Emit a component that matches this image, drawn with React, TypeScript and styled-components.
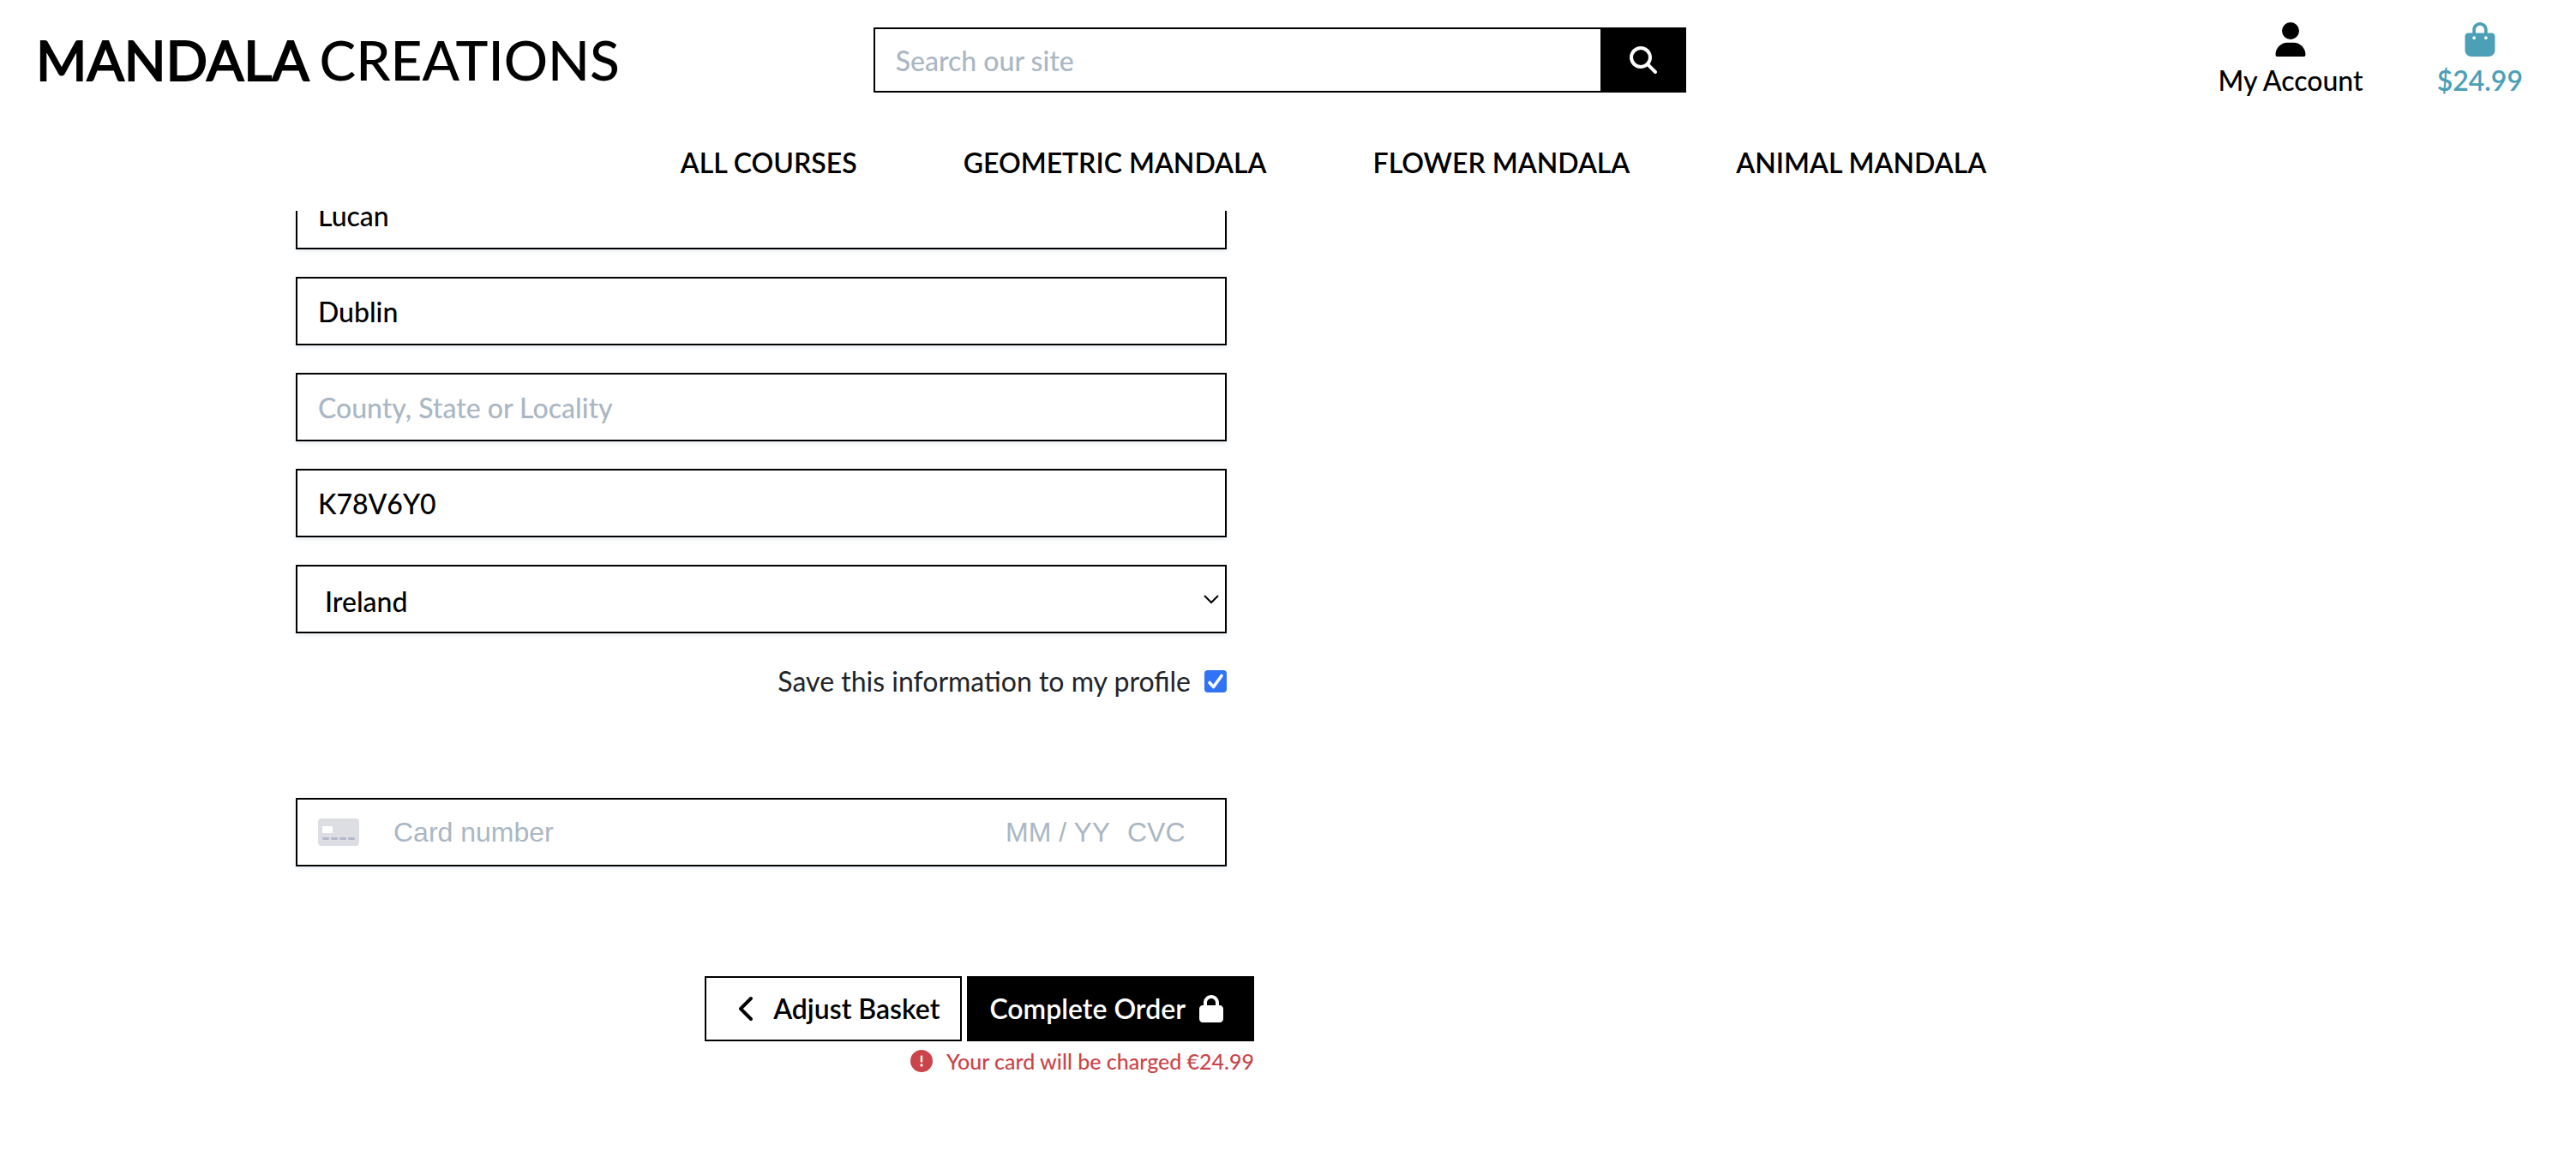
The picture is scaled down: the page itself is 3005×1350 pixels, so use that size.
import React from "react";
import styled, { createGlobalStyle, css } from "styled-components";
import {
  FaBagShopping,
  FaChevronLeft,
  FaCircleExclamation,
  FaLock,
  FaMagnifyingGlass,
  FaUser,
} from "react-icons/fa6";

const sans = `Lato, "Open Sans", sans-serif`;
const cardSans = `"Liberation Sans", Helvetica, Arial, sans-serif`;
const ink = "#000";
const placeholder = "#aab7c4";

const GlobalStyle = createGlobalStyle`
  *, *::before, *::after { box-sizing: border-box; }
  body {
    margin: 0;
    background: #fff;
    color: ${ink};
    font-family: ${sans};
    font-size: 32px;
    line-height: 48px;
  }
  input, select, button { font: inherit; color: inherit; border-radius: 0; margin: 0; }
  input::placeholder { color: ${placeholder}; opacity: 1; }
`;

const Header = styled.header`
  position: sticky;
  top: 0;
  z-index: 2;
  background: #fff;
`;

const TopBar = styled.div`
  display: grid;
  grid-template-columns: repeat(3, 1fr);
  align-items: center;
  height: 140px;
`;

const Logo = styled.a`
  display: flex;
  gap: 12px;
  padding-left: 42px;
  font-size: 64px;
  line-height: 80px;
  white-space: nowrap;
  color: ${ink};
  font-weight: 500;
  text-decoration: none;

  strong {
    font-weight: 400;
    -webkit-text-stroke: 2px currentColor;
  }
`;

const SearchForm = styled.form`
  display: flex;
  padding: 0 36px 0 17px;
`;

const SearchInput = styled.input`
  flex: 1;
  min-width: 0;
  height: 76px;
  padding: 0 24px;
  border: 2px solid ${ink};
  border-right: 0;
  background: #fff;
  outline: 0;
  font-weight: 500;
`;

const SearchButton = styled.button`
  display: flex;
  align-items: center;
  justify-content: center;
  width: 100px;
  height: 76px;
  padding: 0;
  border: 0;
  background: ${ink};
  color: #fff;
`;

const AccountLinks = styled.div`
  display: flex;
  justify-content: flex-end;
  gap: 86px;
  padding: 4px 62px 0 0;
`;

const AccountLink = styled.a<{ $tint?: string }>`
  display: flex;
  flex-direction: column;
  align-items: center;
  gap: 4px;
  color: ${(p) => p.$tint ?? ink};
  font-weight: ${(p) => (p.$tint ? 600 : 500)};
  text-decoration: none;
`;

const Nav = styled.nav`
  display: flex;
  justify-content: center;
  gap: 124px;
  padding: 26px 0 32px 106px;
`;

const NavLink = styled.a`
  color: ${ink};
  font-weight: 600;
  text-decoration: none;
  white-space: nowrap;
`;

const Main = styled.main`
  max-width: 2315px;
  margin: -35px auto 0;
`;

const OrderForm = styled.form`
  display: flex;
  flex-direction: column;
  width: 1086px;
  max-width: 100%;
`;

const Fields = styled.div`
  display: flex;
  flex-direction: column;
  gap: 32px;
`;

const fieldBox = css`
  width: 100%;
  height: 80px;
  border: 2px solid ${ink};
  background: #fff;
  box-shadow: 0 2px 6px 0 #e6ebf1;
`;

const TextField = styled.input`
  ${fieldBox}
  padding: 0 24px;
  outline: 0;
  font-weight: 500;
`;

const SelectWrap = styled.div`
  position: relative;
  display: flex;

  svg {
    position: absolute;
    right: 8px;
    top: 34px;
    pointer-events: none;
  }
`;

const Select = styled.select`
  ${fieldBox}
  font-weight: 500;
  appearance: none;
  padding: 6px 32px 0;
  outline: 0;
`;

const SaveRow = styled.div`
  display: flex;
  justify-content: flex-end;
  align-items: center;
  gap: 16px;
  margin-top: 32px;
  color: #212529;
`;

const Tick = styled.span`
  position: relative;
  display: flex;
  width: 26px;
  height: 26px;

  svg {
    position: absolute;
    inset: 0;
    pointer-events: none;
  }
`;

const Checkbox = styled.input`
  appearance: none;
  width: 26px;
  height: 26px;
  border-radius: 4px;
  background: #fff;
  border: 2px solid #767676;

  &:checked {
    background: #3074f5;
    border: 0;
  }
`;

const CardBox = styled.div`
  ${fieldBox}
  display: flex;
  align-items: center;
  margin-top: 112px;
  padding: 0 24px;
  font-family: ${cardSans};
`;

const CardInput = styled.input<{ $width?: number }>`
  ${(p) => (p.$width ? `width: ${p.$width}px;` : "flex: 1; margin-left: 40px;")}
  min-width: 0;
  height: 48px;
  padding: 0;
  border: 0;
  outline: 0;
  background: transparent;
`;

const Actions = styled.div`
  display: flex;
  justify-content: flex-end;
  gap: 6px;
  margin: 128px -32px 0 0;
`;

const actionBox = css`
  display: flex;
  align-items: center;
  gap: 14px;
  height: 76px;
  border: 2px solid ${ink};
  text-decoration: none;
  white-space: nowrap;
  font-weight: 600;
`;

const BackLink = styled.a`
  ${actionBox}
  padding: 0 24px 0 32px;
  background: #fff;
  color: ${ink};
`;

const SubmitButton = styled.button`
  ${actionBox}
  padding: 0 32px 0 24px;
  background: ${ink};
  color: #fff;
`;

const ChargeNote = styled.p`
  display: flex;
  justify-content: flex-end;
  align-items: center;
  gap: 16px;
  margin: 4px -32px 0 0;
  font-size: 25px;
  font-weight: 500;
  line-height: 38px;
  color: #cb444a;
`;

const links = ["ALL COURSES", "GEOMETRIC MANDALA", "FLOWER MANDALA", "ANIMAL MANDALA"];

const fields = [
  { label: "Street Address", value: "Lucan" },
  { label: "Town or City", value: "Dublin" },
  { label: "County, State or Locality", value: "" },
  { label: "Postal Code", value: "K78V6Y0" },
];

function CardIcon() {
  return (
    <svg width="48" height="32" viewBox="0 0 48 32" aria-hidden="true">
      <rect width="48" height="32" rx="4" fill="#dddee4" />
      <rect x="5" y="9" width="12" height="8" rx="1" fill="#fff" />
      {[5, 15, 25, 35].map((x) => (
        <rect key={x} x={x} y="22" width="8" height="3" rx="1" fill="#b4b8c9" />
      ))}
    </svg>
  );
}

export default function App() {
  return (
    <>
      <GlobalStyle />
      <Header>
        <TopBar>
          <Logo href="#">
            <strong>MANDALA</strong>
            <span>CREATIONS</span>
          </Logo>
          <SearchForm role="search">
            <SearchInput type="text" placeholder="Search our site" aria-label="Search our site" />
            <SearchButton type="button" aria-label="Search">
              <FaMagnifyingGlass size={32} />
            </SearchButton>
          </SearchForm>
          <AccountLinks>
            <AccountLink href="#">
              <FaUser size={40} />
              My Account
            </AccountLink>
            <AccountLink href="#" $tint="#4b9fb6">
              <FaBagShopping size={40} />
              $24.99
            </AccountLink>
          </AccountLinks>
        </TopBar>
        <Nav>
          {links.map((text) => (
            <NavLink key={text} href="#">
              {text}
            </NavLink>
          ))}
        </Nav>
      </Header>
      <Main>
        <OrderForm>
          <Fields>
            {fields.map((f) => (
              <TextField
                key={f.label}
                type="text"
                aria-label={f.label}
                placeholder={f.label}
                defaultValue={f.value}
              />
            ))}
            <SelectWrap>
              <Select aria-label="Country" defaultValue="IE">
                <option value="IE">Ireland</option>
              </Select>
              <svg width="20" height="12" viewBox="0 0 20 12" aria-hidden="true">
                <path d="M2 2l8 8 8-8" fill="none" stroke="#000" strokeWidth="2" />
              </svg>
            </SelectWrap>
          </Fields>
          <SaveRow>
            <label htmlFor="save-info">Save this information to my profile</label>
            <Tick>
              <Checkbox id="save-info" type="checkbox" defaultChecked />
              <svg width="26" height="26" viewBox="0 0 26 26" aria-hidden="true">
                <path
                  d="M6 14.5l4.6 5L20 6.5"
                  fill="none"
                  stroke="#fff"
                  strokeWidth="3.6"
                  strokeLinecap="round"
                  strokeLinejoin="round"
                />
              </svg>
            </Tick>
          </SaveRow>
          <CardBox>
            <CardIcon />
            <CardInput type="text" placeholder="Card number" aria-label="Card number" />
            <CardInput type="text" placeholder="MM / YY" aria-label="Expiry date" $width={142} />
            <CardInput type="text" placeholder="CVC" aria-label="CVC" $width={90} />
          </CardBox>
          <Actions>
            <BackLink href="#">
              <FaChevronLeft size={32} />
              Adjust Basket
            </BackLink>
            <SubmitButton type="button">
              Complete Order
              <FaLock size={32} />
            </SubmitButton>
          </Actions>
          <ChargeNote>
            <FaCircleExclamation size={26} />
            Your card will be charged €24.99
          </ChargeNote>
        </OrderForm>
      </Main>
    </>
  );
}
